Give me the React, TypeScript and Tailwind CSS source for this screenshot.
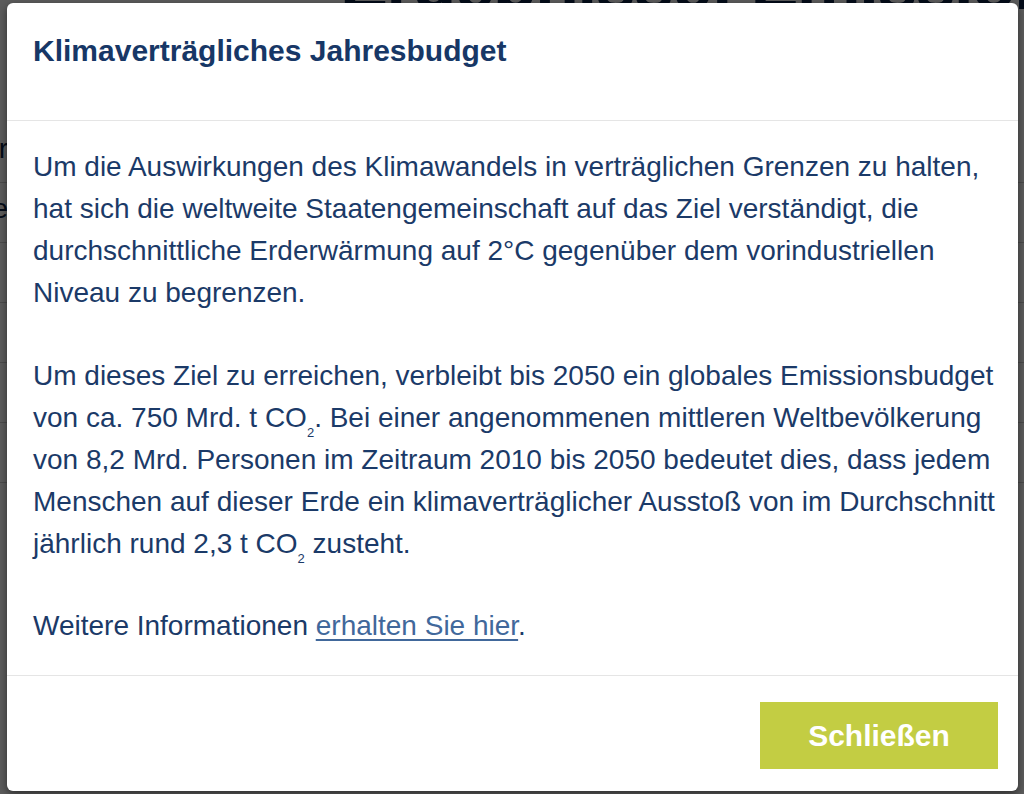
import React from "react"

const font = { fontFamily: '"Liberation Sans", Arial, sans-serif' }

function BackgroundPage() {
  const rows = ["Summe pro Jahr", "Haushalte", "", "", "", ""]
  return (
    <div className="fixed inset-0 bg-white text-[#0d2347]" style={font}>
      <div className="-mt-[52px] pl-[340px] text-[72px] font-bold leading-none whitespace-nowrap tracking-tight">
        Ergebnisse: Emissionsbilanz
      </div>
      <div className="mt-[103px] flex flex-col">
        {rows.map((r, i) => (
          <div key={i} className="h-[60px] border-b border-[#d0d0d0] flex items-start pt-[8px]">
            <div className="w-[8px] flex justify-end whitespace-nowrap text-[28px] leading-[36px]">{r}</div>
          </div>
        ))}
      </div>
    </div>
  )
}

function Sub2() {
  return <sub className="text-[13px] align-[-7px] leading-none">2</sub>
}

export default function App() {
  return (
    <div className="w-[1024px] h-[794px] overflow-hidden" style={font}>
      <BackgroundPage />
      <div className="fixed inset-0 bg-black/[0.64]" />
      <div className="fixed left-[7px] top-[3px] w-[1011px] h-[788px] bg-white rounded-[6px] shadow-[0_3px_9px_rgba(0,0,0,0.5)] flex flex-col text-[#1b3a68]">
        <div className="h-[118px] shrink-0 px-[26px] pt-[30px] border-b border-[#e5e5e5]">
          <h2 className="text-[30px] font-bold leading-[36px] text-[#173766]">Klimaverträgliches Jahresbudget</h2>
        </div>
        <div className="flex-1 pl-[26px] pr-[6px] pt-[25px] text-[28px] leading-[42px] whitespace-nowrap">
          <p>
            Um die Auswirkungen des Klimawandels in verträglichen Grenzen zu halten,<br />
            hat sich die weltweite Staatengemeinschaft auf das Ziel verständigt, die<br />
            durchschnittliche Erderwärmung auf 2°C gegenüber dem vorindustriellen<br />
            Niveau zu begrenzen.
          </p>
          <p className="mt-[41px]">
            Um dieses Ziel zu erreichen, verbleibt bis 2050 ein globales Emissionsbudget<br />
            von ca. 750 Mrd. t CO<Sub2 />. Bei einer angenommenen mittleren Weltbevölkerung<br />
            von 8,2 Mrd. Personen im Zeitraum 2010 bis 2050 bedeutet dies, dass jedem<br />
            Menschen auf dieser Erde ein klimaverträglicher Ausstoß von im Durchschnitt<br />
            jährlich rund 2,3 t CO<Sub2 /> zusteht.
          </p>
          <p className="mt-[40px]">
            Weitere Informationen{" "}
            <a href="#" className="text-[#41689b] underline underline-offset-[4px] decoration-[1.5px]">
              erhalten Sie hier
            </a>
            .
          </p>
        </div>
        <div className="h-[116px] shrink-0 border-t border-[#e5e5e5] flex justify-end items-start pt-[26px] pr-[20px]">
          <button className="w-[238px] h-[67px] bg-[#c3cd43] text-white text-[30px] font-bold">
            Schließen
          </button>
        </div>
      </div>
    </div>
  )
}
